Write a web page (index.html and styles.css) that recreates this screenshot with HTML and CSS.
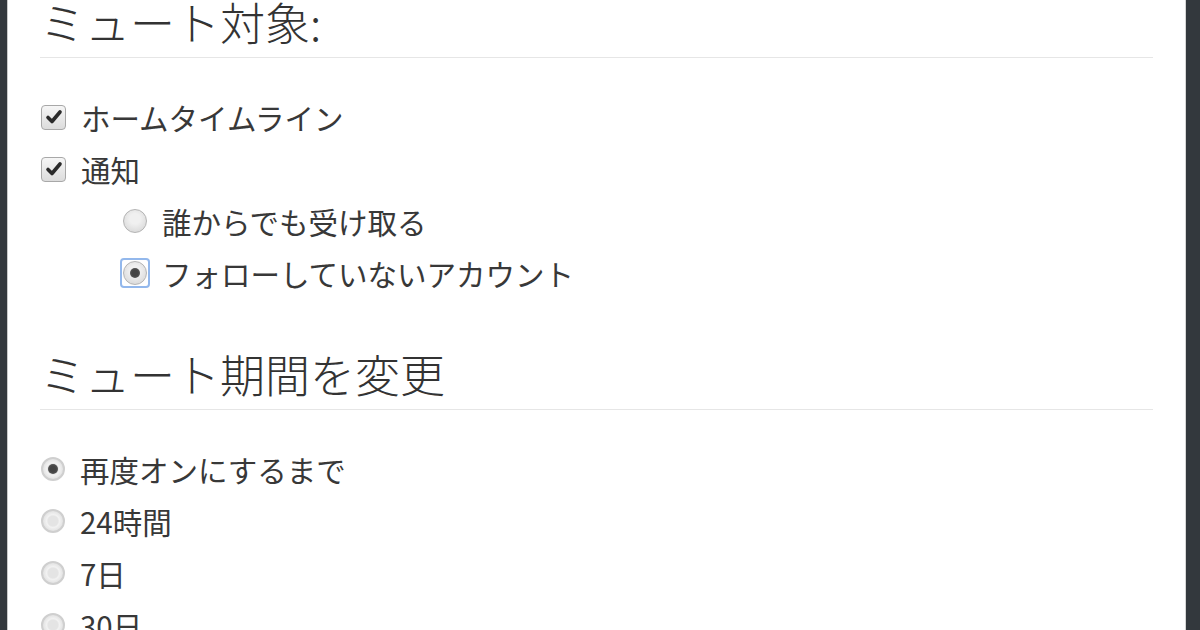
FILE: index.html
```html
<!DOCTYPE html>
<html lang="ja">
<head>
    <meta charset="UTF-8">
    <meta name="viewport" content="width=device-width, initial-scale=1.0">
    <title>ミュート設定</title>
    <link rel="stylesheet" href="styles.css">
</head>
<body>

<div class="panel">
    <h2 class="section-title">ミュート対象:</h2>
    <ul class="options">
        <li class="option">
            <span class="check"><svg width="20" height="20" viewBox="0 0 20 20"><path d="M4 10.5 L8 14.5 L16 5" fill="none" stroke="#2a2a2a" stroke-width="3.6" stroke-linecap="round" stroke-linejoin="round"/></svg></span>
            ホームタイムライン
        </li>
        <li class="option">
            <span class="check"><svg width="20" height="20" viewBox="0 0 20 20"><path d="M4 10.5 L8 14.5 L16 5" fill="none" stroke="#2a2a2a" stroke-width="3.6" stroke-linecap="round" stroke-linejoin="round"/></svg></span>
            通知
        </li>
        <li class="option sub">
            <span class="radio"></span>
            誰からでも受け取る
        </li>
        <li class="option sub">
            <span class="radio checked focused"></span>
            フォローしていないアカウント
        </li>
    </ul>

    <h2 class="section-title">ミュート期間を変更</h2>
    <ul class="options">
        <li class="option">
            <span class="radio ring checked"></span>
            再度オンにするまで
        </li>
        <li class="option">
            <span class="radio ring"></span>
            24時間
        </li>
        <li class="option">
            <span class="radio ring"></span>
            7日
        </li>
        <li class="option">
            <span class="radio ring"></span>
            30日
        </li>
    </ul>
</div>

</body>
</html>
```

FILE: styles.css
```css
body {
    margin: 0;
    background-color: #33383d;
    color: #383838;
    font-family: "Noto Sans CJK JP", "Noto Sans", sans-serif;
    height: 630px;
    overflow: hidden;
}
.panel {
    margin: 0 14px 0 7px;
    padding: 0 32px;
    min-height: 630px;
    background-color: #fff;
    border-left: 1px solid #c9c9c9;
    border-right: 1px solid #d6d6d6;
}
.section-title {
    margin: 0;
    padding-bottom: 14px;
    font-size: 45px;
    font-weight: 300;
    line-height: 43px;
    color: #333;
    border-bottom: 1px solid #e6e6e6;
}
.options + .section-title {
    margin-top: 53px;
}
.options {
    list-style: none;
    margin: 33px 0 0;
    padding: 0;
}
.option {
    display: flex;
    align-items: center;
    gap: 15px;
    height: 52px;
    font-size: 29.5px;
}
.option.sub {
    padding-left: 82px;
}
.check {
    width: 25px;
    height: 25px;
    margin-left: 1px;
    box-sizing: border-box;
    display: flex;
    align-items: center;
    justify-content: center;
    border: 1px solid #a8a8a8;
    border-radius: 4px;
    background: linear-gradient(#f6f6f6, #dcdcdc);
}
.radio {
    position: relative;
    width: 24px;
    height: 24px;
    margin-left: 1px;
    box-sizing: border-box;
    border: 1px solid #b4b4b4;
    border-radius: 50%;
    background: radial-gradient(circle at 50% 40%, #f0f0f0 30%, #dadada 80%);
}
.radio.ring {
    border: 2px solid #cfcfcf;
    background: radial-gradient(circle, #e4e4e4 35%, #f2f2f2 45%, #e0e0e0 75%);
}
.radio.checked::before {
    content: "";
    position: absolute;
    left: 50%;
    top: 50%;
    width: 10px;
    height: 10px;
    margin: -5px 0 0 -5px;
    border-radius: 50%;
    background: radial-gradient(circle, #444 40%, #666 100%);
}
.radio.focused::after {
    content: "";
    position: absolute;
    top: -4px;
    left: -4px;
    right: -4px;
    bottom: -4px;
    border: 2px solid #93b8ec;
    border-radius: 4px;
}
```
